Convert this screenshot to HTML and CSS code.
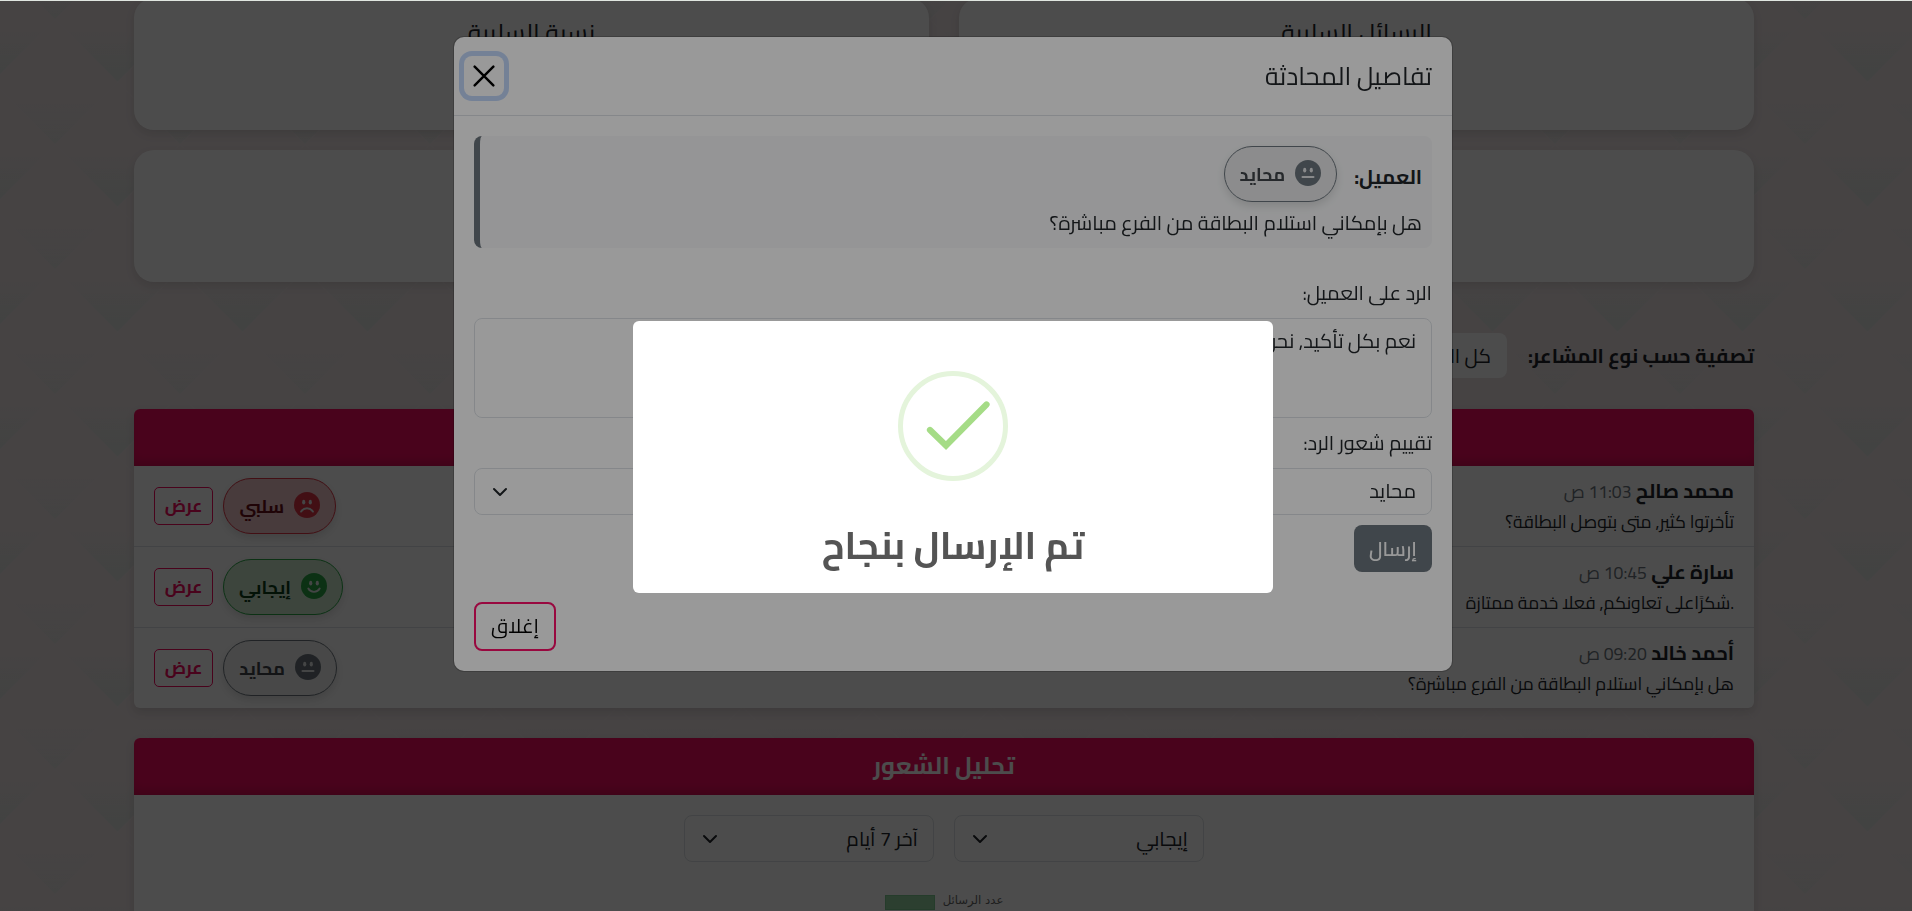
FILE: index.html
```html
<!DOCTYPE html>
<html lang="ar" dir="rtl">
<head>
<meta charset="utf-8">
<title>تحليل الشعور</title>
<link rel="stylesheet" href="styles.css">
</head>
<body>
<svg class="sprite" aria-hidden="true">
  <symbol id="face-neutral" viewBox="0 0 26 26"><circle cx="13" cy="13" r="13"/><g class="cut"><ellipse cx="9.7" cy="10.2" rx="1.6" ry="2.4"/><ellipse cx="16.3" cy="10.2" rx="1.6" ry="2.4"/><rect x="6.5" y="16" width="13" height="1.9" rx=".9"/></g></symbol>
  <symbol id="face-sad" viewBox="0 0 26 26"><circle cx="13" cy="13" r="13"/><g class="cut"><ellipse cx="9.7" cy="10.2" rx="1.6" ry="2.4"/><ellipse cx="16.3" cy="10.2" rx="1.6" ry="2.4"/></g><path class="mouth" d="M7.1 19.6a6.9 6.9 0 0 1 11.8 0"/></symbol>
  <symbol id="face-happy" viewBox="0 0 26 26"><circle cx="13" cy="13" r="13"/><g class="cut"><ellipse cx="9.7" cy="10.2" rx="1.6" ry="2.4"/><ellipse cx="16.3" cy="10.2" rx="1.6" ry="2.4"/></g><path class="mouth" d="M7.3 15.6a6.6 6.6 0 0 0 11.4 0"/></symbol>
  <symbol id="chevron" viewBox="0 0 16 16"><path d="m2 5 6 6 6-6"/></symbol>
</svg>

<svg class="pattern" aria-hidden="true">
  <defs>
    <linearGradient id="fade" x1="0" y1="0" x2="0" y2="1"><stop offset="0" stop-color="#dbe0dd" stop-opacity="0"/><stop offset="1" stop-color="#dbe0dd"/></linearGradient>
    <pattern id="tri" width="125" height="125" patternUnits="userSpaceOnUse" x="55" y="82">
      <path fill="url(#fade)" d="M62.500 125L12 74.500h101z"/>
      <path fill="url(#fade)" opacity=".5" d="M0 62.500V22h40.500zM125 62.500V22H84.500z"/>
      <path fill="none" stroke="#efe6e7" stroke-opacity=".8" d="M0 62.500L62.500 0 125 62.500 62.500 125z"/>
    </pattern>
  </defs>
  <rect width="100%" height="100%" fill="url(#tri)"/>
</svg>

<main class="page">
  <section class="stats">
    <div class="stat"><h5>الرسائل السلبية</h5></div>
    <div class="stat"><h5>نسبة السلبية</h5></div>
    <div class="stat wide"></div>
  </section>

  <div class="filter">
    <label>تصفية حسب نوع المشاعر:</label>
    <div class="filter-select">كل المشاعر</div>
  </div>

  <section class="card conversations">
    <header class="card-head"></header>
    <ul class="rows">
      <li>
        <div class="who"><p class="name"><b>محمد صالح</b> <small>11:03 ص</small></p><p class="msg">تأخرتوا كثير, متى بتوصل البطاقة؟</p></div>
        <div class="acts"><span class="badge sad"><svg><use href="#face-sad"/></svg><span>سلبي</span></span><button class="view">عرض</button></div>
      </li>
      <li>
        <div class="who"><p class="name"><b>سارة علي</b> <small>10:45 ص</small></p><p class="msg">.شكرًاعلى تعاونكم, فعلا خدمة ممتازة</p></div>
        <div class="acts"><span class="badge happy"><svg><use href="#face-happy"/></svg><span>إيجابي</span></span><button class="view">عرض</button></div>
      </li>
      <li>
        <div class="who"><p class="name"><b>أحمد خالد</b> <small>09:20 ص</small></p><p class="msg">هل بإمكاني استلام البطاقة من الفرع مباشرة؟</p></div>
        <div class="acts"><span class="badge neutral"><svg><use href="#face-neutral"/></svg><span>محايد</span></span><button class="view">عرض</button></div>
      </li>
    </ul>
  </section>

  <section class="card analysis">
    <header class="card-head"><h4>تحليل الشعور</h4></header>
    <div class="pickers">
      <div class="select"><span>إيجابي</span><svg class="chev"><use href="#chevron"/></svg></div>
      <div class="select"><span>آخر 7 أيام</span><svg class="chev"><use href="#chevron"/></svg></div>
    </div>
    <div class="legend"><span>عدد الرسائل</span><i></i></div>
  </section>
</main>

<div class="backdrop"></div>

<div class="modal">
  <header class="modal-head">
    <h5>تفاصيل المحادثة</h5>
    <button class="close"><svg viewBox="0 0 20 20"><path d="M1.5 1.5l17 17M18.5 1.5l-17 17"/></svg></button>
  </header>
  <div class="modal-body">
    <div class="client">
      <div class="client-top"><strong>العميل:</strong><span class="badge neutral"><svg><use href="#face-neutral"/></svg><span>محايد</span></span></div>
      <p>هل بإمكاني استلام البطاقة من الفرع مباشرة؟</p>
    </div>
    <label class="lab-reply">الرد على العميل:</label>
    <div class="textarea">نعم بكل تأكيد, نحن</div>
    <label class="lab-rate">تقييم شعور الرد:</label>
    <div class="select"><span>محايد</span><svg class="chev"><use href="#chevron"/></svg></div>
    <button class="send">إرسال</button>
  </div>
  <footer class="modal-foot"><button class="dismiss">إغلاق</button></footer>
</div>

<div class="swal-shade"><div class="swal">
  <svg class="ok" viewBox="0 0 110 110"><circle cx="55" cy="55" r="52.5"/><path d="M32 59L48 74.500 88.500 33.500"/></svg>
  <h2>تم الإرسال بنجاح</h2>
</div></div>
<div class="topline"></div>
</body>
</html>
```
FILE: styles.css
```css
* { box-sizing: border-box; }
html, body { margin: 0; height: 100%; overflow: hidden; }
body { background: #eae0e1; color: #212529; font: 20px/1.5 Cairo, "DejaVu Sans", sans-serif; }
h2, h4, h5, p, ul { margin: 0; padding: 0; font-weight: 400; }
button { font: inherit; background: none; margin: 0; padding: 0; }
.sprite { position: absolute; width: 0; height: 0; }
.pattern { position: absolute; inset: 0; width: 100%; height: 100%; }
.page { position: relative; height: 911px; overflow: hidden; padding: 0 158px 0 134px; }

.stats { display: grid; grid-template-columns: 1fr 1fr; gap: 20px 30px; margin-top: -2px; }
.stat { height: 132px; background: #fff; border-radius: 20px; box-shadow: 0 4px 10px rgba(0,0,0,.1); text-align: center; padding-top: 16px; white-space: nowrap; }
.stat h5 { font-size: 25px; line-height: 37px; }
.stat.wide { grid-column: 1 / 3; }

.filter { display: flex; align-items: center; gap: 21px; margin-top: 51px; height: 45px; font-weight: 700; white-space: nowrap; }
.filter-select { width: 240px; height: 45px; background: #fff; border-radius: 8px; padding: 0 16px; line-height: 45px; font-weight: 400; }

.card { background: #fff; border-radius: 6px; box-shadow: 0 4px 10px rgba(0,0,0,.12); }
.conversations { margin-top: 31px; }
.analysis { margin-top: 30px; height: 240px; }
.card-head { height: 57px; background: #f70d60; border-radius: 6px 6px 0 0; color: #fff; text-align: center; box-shadow: inset 0 -8px 14px -6px rgba(0,0,0,.22); }
.card-head h4 { font-size: 24px; font-weight: 700; line-height: 55px; }
.rows { list-style: none; }
.rows li { display: flex; justify-content: space-between; align-items: center; height: 81px; padding: 0 20px; border-bottom: 1px solid #dee2e6; }
.rows li:last-child { border-bottom: 0; height: 80px; }
.name { font-size: 20px; line-height: 30px; white-space: nowrap; }
.name small { font-size: 17.500px; color: #6c757d; }
.msg { font-size: 17.500px; line-height: 30px; white-space: nowrap; }
.acts { display: flex; align-items: center; gap: 10px; }
.view { width: 59px; height: 38px; border: 1px solid #f70d60; border-radius: 5px; color: #f70d60; font-size: 17.500px; font-weight: 700; line-height: 34px; }

.badge { display: inline-flex; align-items: center; gap: 10px; height: 56px; width: 113px; padding: 0 15px 2px; border: 1px solid; border-radius: 28px; font-size: 18px; font-weight: 700; box-shadow: 0 4px 8px rgba(0,0,0,.12); white-space: nowrap; }
.badge svg { width: 26px; height: 26px; flex: none; }
.badge span { padding-top: 2px; }
.badge.neutral { border-color: #6c757d; background: rgba(0,0,0,.06); color: #40454a; width: 114px; }
.badge.neutral svg { fill: #6c757d; }
.badge.sad { border-color: #dc3545; background: #f1c6c9; color: #6b0f18; }
.badge.sad svg { fill: #dc3545; }
.badge.happy { border-color: #28a745; background: #cfe6cf; color: #0b3d17; width: 120px; }
.badge.happy svg { fill: #28a745; }
.cut { fill: #e4e6e8; }
.mouth { fill: none; stroke: #e4e6e8; stroke-width: 1.9; stroke-linecap: round; }

.select { display: flex; align-items: center; justify-content: space-between; height: 47px; padding: 0 15px 0 17px; border: 1px solid #dee2e6; border-radius: 8px; white-space: nowrap; }
.chev { width: 16px; height: 16px; fill: none; stroke: #212529; stroke-width: 2; stroke-linecap: round; stroke-linejoin: round; }
.pickers { display: flex; justify-content: center; gap: 20px; padding-top: 20px; }
.pickers .select { width: 250px; }
.legend { display: flex; justify-content: center; gap: 8px; margin-top: 27px; font: 11.700px/22px "DejaVu Sans", sans-serif; color: #666; }
.legend i { width: 50px; height: 15px; margin-top: 6px; background: #94d3a2; border: 1px solid #7fc890; }

.backdrop { position: fixed; inset: 0; background: rgba(0,0,0,.5); }
.modal { position: fixed; left: 454px; top: 37px; width: 998px; height: 634px; background: #fff; border-radius: 10px; box-shadow: 0 0 0 1px rgba(0,0,0,.18); }
.modal-head { display: flex; align-items: center; justify-content: space-between; height: 79px; padding: 0 20px 0 10px; border-bottom: 1px solid #dee2e6; }
.modal-head h5 { font-size: 25px; }
.close { width: 40px; height: 40px; border: 0; border-radius: 8px; box-shadow: 0 0 0 5px #c2d8fb; display: grid; place-items: center; }
.close svg { width: 22px; height: 22px; fill: none; stroke: #000; stroke-width: 2.2; stroke-linecap: round; }
.modal-body { display: flex; flex-direction: column; padding: 20px; height: 477px; white-space: nowrap; }
.client { height: 112px; background: #f8f9fa; border-radius: 8px; border-left: 6px solid #6c757d; padding: 10px; }
.client-top { display: flex; gap: 17px; height: 56px; align-items: center; }
.client-top strong { padding-top: 6px; }
.client-top .badge { width: 113px; }
.client p { line-height: 38px; margin-top: 2px; }
.lab-reply { margin-top: 30px; height: 40px; line-height: 30px; }
.textarea { height: 100px; border: 1px solid #dee2e6; border-radius: 8px; padding: 7px 15px; }
.lab-rate { margin-top: 10px; height: 40px; line-height: 30px; }
.modal .select { line-height: 43px; align-items: flex-start; }
.modal .select .chev { margin-top: 15px; }
.send { align-self: flex-start; margin-top: 10px; width: 78px; height: 47px; border: 0; border-radius: 8px; background: #6c757d; color: #fff; flex: none; line-height: 42px; font-weight: 600; }
.modal-foot { padding: 9px 20px; direction: ltr; }
.dismiss { width: 82px; height: 49px; border: 2px solid #fd0e69; border-radius: 8px; color: #000; padding-bottom: 2px; line-height: 40px; }

.swal-shade { position: fixed; inset: 0; background: rgba(0,0,0,.4); }
.swal { position: absolute; left: 633px; top: 321px; width: 640px; height: 272px; background: #fff; border-radius: 6px; text-align: center; padding-top: 50px; }
.ok { display: block; width: 110px; height: 110px; margin: 0 auto; fill: none; stroke-width: 5; }
.ok circle { stroke: #e4f4db; }
.ok path { stroke: #a5dc86; stroke-width: 6.250; stroke-linecap: round; }
.swal h2 { color: #545454; font-size: 37.500px; font-weight: 700; line-height: 60px; margin-top: 34px; white-space: nowrap; }
.topline { position: fixed; left: 0; right: 0; top: 0; height: 1px; background: #e0e6e0; }
```
